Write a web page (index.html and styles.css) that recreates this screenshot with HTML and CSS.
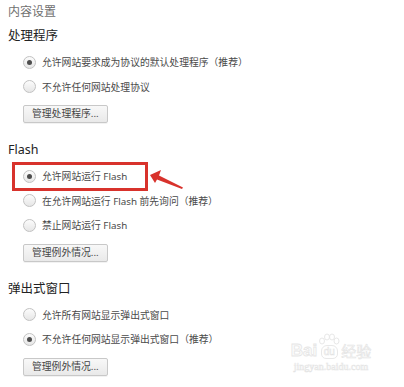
FILE: index.html
```html
<!DOCTYPE html>
<html lang="zh-CN">
<head>
<meta charset="utf-8">
<title>内容设置</title>
<link rel="stylesheet" href="styles.css">
</head>
<body>
<div class="page">
  <div class="title">内容设置</div>

  <section class="section">
    <h2 class="heading">处理程序</h2>
    <div class="options">
      <label class="option"><span class="radio checked"></span><span class="label">允许网站要求成为协议的默认处理程序（推荐）</span></label>
      <label class="option"><span class="radio"></span><span class="label">不允许任何网站处理协议</span></label>
    </div>
    <button class="btn">管理处理程序...</button>
  </section>

  <section class="section">
    <h2 class="heading">Flash</h2>
    <div class="options">
      <label class="option"><span class="radio checked"></span><span class="label">允许网站运行 Flash</span></label>
      <label class="option"><span class="radio"></span><span class="label">在允许网站运行 Flash 前先询问（推荐）</span></label>
      <label class="option"><span class="radio"></span><span class="label">禁止网站运行 Flash</span></label>
    </div>
    <button class="btn">管理例外情况...</button>
  </section>

  <section class="section">
    <h2 class="heading">弹出式窗口</h2>
    <div class="options">
      <label class="option"><span class="radio"></span><span class="label">允许所有网站显示弹出式窗口</span></label>
      <label class="option"><span class="radio checked"></span><span class="label">不允许任何网站显示弹出式窗口（推荐）</span></label>
    </div>
    <button class="btn">管理例外情况...</button>
  </section>

  <div class="highlight"></div>
  <svg class="arrow" width="404" height="387" viewBox="0 0 404 387">
    <polygon points="150,175 161,170 159,175.5 183,187.5 182,189 157,179.5 155,183" fill="#d8322c"/>
  </svg>

  <div class="watermark">
    <div class="wm-logo">
      <span class="wm-bai">Bai</span>
      <span class="wm-paw">
        <svg class="paw-toes" width="22" height="12" viewBox="0 0 22 12">
          <ellipse cx="4" cy="8" rx="2.5" ry="3" fill="none" stroke="#e8e8e8" stroke-width="1"/>
          <ellipse cx="9" cy="4" rx="2.5" ry="3" fill="none" stroke="#e8e8e8" stroke-width="1"/>
          <ellipse cx="14" cy="4" rx="2.5" ry="3" fill="none" stroke="#e8e8e8" stroke-width="1"/>
          <ellipse cx="18.5" cy="8" rx="2.5" ry="3" fill="none" stroke="#e8e8e8" stroke-width="1"/>
        </svg>
        <span class="wm-du">du</span>
      </span>
      <span class="wm-jy">经验</span>
    </div>
    <div class="wm-url">jingyan.baidu.com</div>
  </div>
</div>
</body>
</html>
```
FILE: styles.css
```css
html, body {
  margin: 0;
  padding: 0;
  background: #ffffff;
}

body {
  font-family: "Noto Sans", "Noto Sans CJK SC", sans-serif;
  color: #444;
}

.page {
  position: relative;
  width: 404px;
  height: 387px;
  overflow: hidden;
  padding: 4px 0 0 8px;
  box-sizing: border-box;
}

.title {
  font-size: 12px;
  line-height: 16px;
  height: 16px;
  color: #6f6f6f;
}

.section {
  display: flex;
  flex-direction: column;
  align-items: flex-start;
  margin-top: 8px;
}

.section + .section {
  margin-top: 19px;
}

.heading {
  margin: 0;
  font-size: 12.5px;
  font-weight: normal;
  line-height: 16px;
  height: 16px;
  color: #222;
}

.options {
  display: flex;
  flex-direction: column;
  margin-top: 6px;
  padding-left: 14.5px;
}

.option {
  display: flex;
  align-items: center;
  height: 24.5px;
  font-size: 9.8px;
  color: #4a4a4a;
}

.radio {
  width: 11px;
  height: 11px;
  border: 1px solid #c2c2c2;
  border-radius: 50%;
  background: linear-gradient(#fcfcfc, #e6e6e6);
  display: flex;
  align-items: center;
  justify-content: center;
  margin-right: 6.5px;
  flex: none;
}

.radio.checked::after {
  content: "";
  width: 5px;
  height: 5px;
  border-radius: 50%;
  background: #4d4d4d;
}

.label {
  white-space: nowrap;
}

.btn {
  margin-top: 6px;
  margin-left: 15px;
  height: 18px;
  padding: 0 8px;
  font-family: "Noto Sans", "Noto Sans CJK SC", sans-serif;
  font-size: 9.8px;
  line-height: 16px;
  color: #444;
  border: 1px solid #c8c8c8;
  border-radius: 2px;
  background: linear-gradient(#f8f8f8, #e9e9e9);
  box-shadow: 0 1px 0 rgba(0,0,0,0.05);
}

.highlight {
  position: absolute;
  left: 12px;
  top: 162px;
  width: 136px;
  height: 29px;
  box-sizing: border-box;
  border: 3px solid #d8322c;
}

.arrow {
  position: absolute;
  left: 0;
  top: 0;
}

.watermark {
  position: absolute;
  left: 285px;
  top: 331px;
  width: 92px;
  display: flex;
  flex-direction: column;
  align-items: center;
  color: #fff;
}

.wm-logo {
  display: flex;
  align-items: flex-end;
  height: 28px;
}

.wm-bai {
  font-family: "Liberation Sans", sans-serif;
  font-weight: bold;
  font-size: 17px;
  line-height: 16px;
  color: #fcfcfc;
  -webkit-text-stroke: 0.8px #e6e6e6;
}

.wm-paw {
  display: flex;
  flex-direction: column;
  align-items: center;
  margin: 0 1px;
}

.wm-du {
  font-family: "Liberation Sans", sans-serif;
  font-size: 10px;
  line-height: 12px;
  padding: 0 2px;
  color: #fff;
  -webkit-text-stroke: 0.5px #e2e2e2;
  border: 1px solid #e8e8e8;
  border-radius: 6px 6px 5px 5px;
}

.wm-jy {
  font-family: "Noto Sans CJK SC", sans-serif;
  font-size: 15px;
  line-height: 16px;
  color: #fcfcfc;
  -webkit-text-stroke: 0.6px #e4e4e4;
}

.wm-url {
  font-family: "Liberation Serif", serif;
  font-size: 10px;
  line-height: 12px;
  margin-top: 2px;
  color: #fcfcfc;
  -webkit-text-stroke: 0.5px #e4e4e4;
}
```
